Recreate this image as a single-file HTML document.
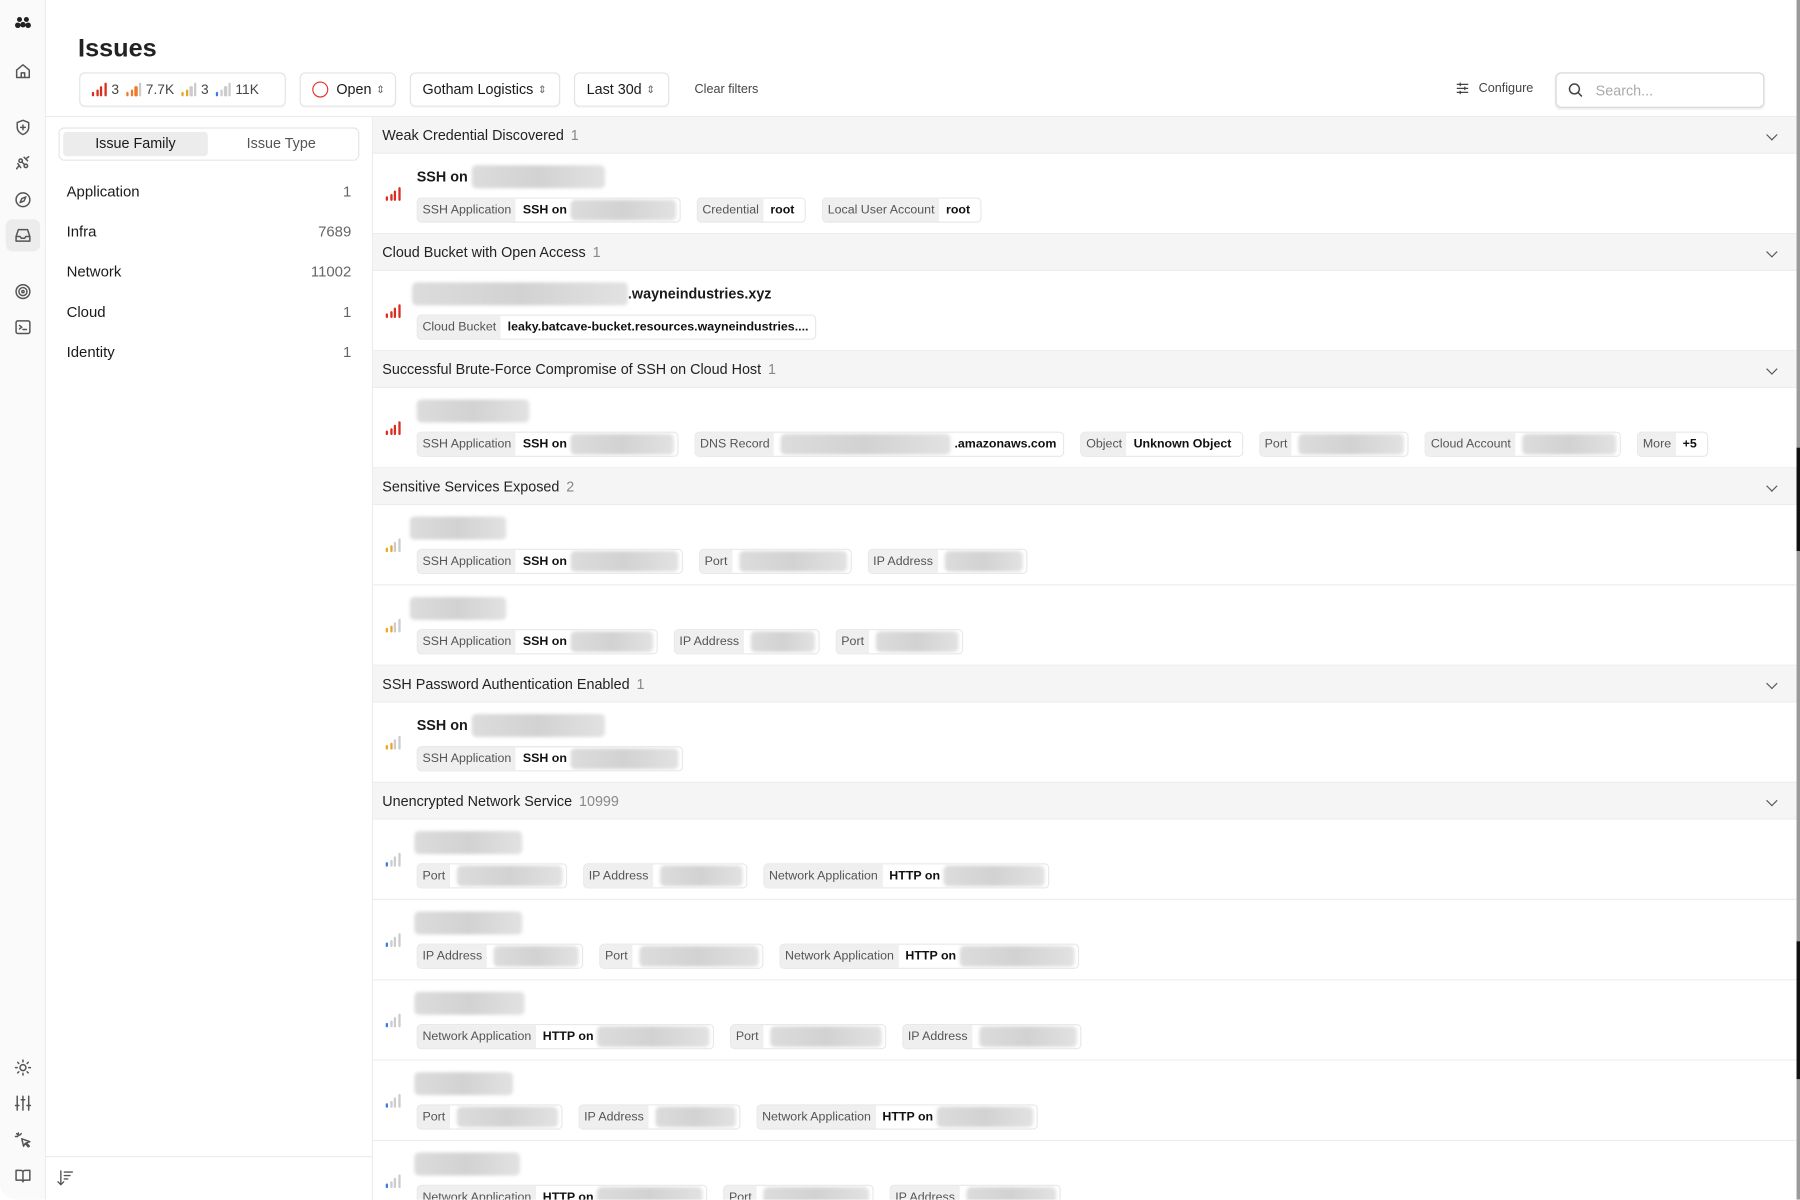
<!DOCTYPE html>
<html><head><meta charset="utf-8"><style>
*{box-sizing:border-box;margin:0;padding:0}
html,body{width:1800px;height:1200px;overflow:hidden;background:#fff}
body{font-family:"Liberation Sans",sans-serif;color:#1a1a1a}
#w{position:absolute;left:0;top:0;width:1568px;height:1045px;transform:scale(1.14796);transform-origin:0 0;overflow:hidden}
.a{position:absolute}
.rail{left:0;top:0;width:40px;height:1045px;background:#fafafa;border-right:1px solid #ebebeb;border-radius:0 0 0 14px}
.ic{position:absolute;left:12px;width:16px;height:16px}
.ic svg{width:16px;height:16px;fill:none;stroke:#555;stroke-width:1.3;stroke-linecap:round;stroke-linejoin:round}
.btn{position:absolute;top:63px;height:30px;border:1px solid #e3e3e3;border-radius:5px;font-size:12.5px;display:flex;align-items:center;padding:0 10px;gap:4px;white-space:nowrap;box-shadow:0 1px 1px rgba(0,0,0,.03)}
.ud{font-size:9px;color:#666}
.sig{display:inline-block;width:14px;height:12px;position:relative;flex-shrink:0}
.sig i{position:absolute;bottom:0;width:2.3px;background:#ccc;border-radius:1px}
.sig i:nth-child(1){left:0;height:4px}.sig i:nth-child(2){left:3.6px;height:6.5px}.sig i:nth-child(3){left:7.2px;height:9px}.sig i:nth-child(4){left:10.8px;height:12px}
.r i{background:#d92d20!important}
.o i:nth-child(-n+3){background:#ef7a2b}
.y i:nth-child(-n+2){background:#e6a820}
.b i:nth-child(1){background:#3b7be8}
.lp{left:40px;top:102px;width:285px;height:943px;border-right:1px solid #ebebeb}
.li{position:absolute;left:18px;right:18px;font-size:13px;display:flex;justify-content:space-between}
.li span:last-child{color:#666}
.gh{position:absolute;left:325px;width:1240px;height:32px;background:#f5f5f5;font-size:12.5px;color:#222;padding-left:8px;line-height:32px;border-bottom:1px solid #ececec}
.gh b{font-weight:normal;color:#888;margin-left:6px}
.gh .cv{position:absolute;right:18px;top:12px;width:7px;height:7px;border-right:1.2px solid #555;border-bottom:1.2px solid #555;transform:rotate(45deg)}
.row{position:absolute;left:325px;width:1240px;height:70px;border-bottom:1px solid #ececec;background:#fff}
.row .sig{position:absolute;left:11px;top:29px}
.tt{position:absolute;left:38px;top:9px;height:22px;font-size:12.5px;font-weight:bold;display:flex;align-items:center;white-space:nowrap}
.bl{display:inline-block;height:20px;background:linear-gradient(90deg,#dcdcdc,#d2d2d2 50%,#e2e2e2);border-radius:4px;filter:blur(1.5px)}
.chips{position:absolute;left:38px;top:38px;display:flex;gap:14px;white-space:nowrap}
.ch{height:22px;border:1px solid #e8e8e8;border-radius:4px;display:flex;font-size:10.8px;overflow:hidden;background:#fff}
.ch .k{background:#efefef;color:#555;padding:0 4px;line-height:20px}
.ch .v{padding:0 3px 0 6px;line-height:20px;display:flex;align-items:center;gap:3px;font-weight:bold;color:#111}
.ch .v .bl{height:18px}
</style></head><body><div id="w">

<div class="a rail">
 <div class="ic" style="top:12px"><svg viewBox="0 0 16 16"><g fill="#222" stroke="none"><circle cx="5" cy="5" r="2.2"/><circle cx="11" cy="5" r="2.2"/><circle cx="3.5" cy="10" r="2.4"/><circle cx="8" cy="9.5" r="2.4"/><circle cx="12.5" cy="10" r="2.4"/></g></svg></div>
 <div class="ic" style="top:54px"><svg viewBox="0 0 16 16"><path d="M2.5 7L8 2.5 13.5 7V13.5H2.5Z M6.5 13.5V9.5H9.5V13.5"/></svg></div>
 <div class="ic" style="top:103px"><svg viewBox="0 0 16 16"><path d="M8 1.8L13 3.8V8C13 11 10.5 13.3 8 14.2 5.5 13.3 3 11 3 8V3.8Z M8 6V10 M6 8H10"/></svg></div>
 <div class="ic" style="top:134px"><svg viewBox="0 0 16 16"><circle cx="6" cy="6" r="1.5"/><circle cx="10.5" cy="10.5" r="1.5"/><path d="M7 7L9.5 9.5 M9 3L12 6 M4 11L2.5 13 M11 4L13 2.5 M3.5 8.5L6 12"/></svg></div>
 <div class="ic" style="top:166px"><svg viewBox="0 0 16 16"><circle cx="8" cy="8" r="6"/><path d="M10.5 5.5L9 9 5.5 10.5 7 7Z"/></svg></div>
 <div style="position:absolute;left:5px;top:191px;width:30px;height:28px;background:#ececec;border-radius:6px"></div>
 <div class="ic" style="top:197px"><svg viewBox="0 0 16 16"><path d="M2 9L4 3H12L14 9V13H2Z M2 9H5.5L6.5 10.5H9.5L10.5 9H14"/></svg></div>
 <div class="ic" style="top:246px"><svg viewBox="0 0 16 16"><circle cx="8" cy="8" r="6"/><circle cx="8" cy="8" r="3.5"/><circle cx="8" cy="8" r="1"/></svg></div>
 <div class="ic" style="top:277px"><svg viewBox="0 0 16 16"><rect x="2" y="2.5" width="12" height="11" rx="1.5"/><path d="M5 6.5L7 8 5 9.5 M8 10H11"/></svg></div>
 <div class="ic" style="top:922px"><svg viewBox="0 0 16 16"><circle cx="8" cy="8" r="2.6"/><path d="M8 1.5V3 M8 13V14.5 M1.5 8H3 M13 8H14.5 M3.4 3.4L4.4 4.4 M11.6 11.6L12.6 12.6 M3.4 12.6L4.4 11.6 M11.6 4.4L12.6 3.4"/></svg></div>
 <div class="ic" style="top:953px"><svg viewBox="0 0 16 16"><path d="M3 2V14 M8 2V14 M13 2V14 M1.5 10H4.5 M6.5 5H9.5 M11.5 10H14.5"/></svg></div>
 <div class="ic" style="top:985px"><svg viewBox="0 0 16 16"><path d="M7 7L14 9.5 11 10.5 13.5 13.5 12.5 14 10 11 8.5 13.5Z M4 2V4 M1.5 5H3.5 M2.5 2.5L3.8 3.8 M6.5 2.5L5.2 3.8"/></svg></div>
 <div class="ic" style="top:1016px"><svg viewBox="0 0 16 16"><path d="M2 3.5H6C7 3.5 8 4.2 8 5.2V13.5C8 12.7 7.2 12 6 12H2Z M14 3.5H10C9 3.5 8 4.2 8 5.2V13.5C8 12.7 8.8 12 10 12H14Z"/></svg></div>
</div>

<div class="a" style="left:68px;top:29px;font-size:22px;font-weight:bold;color:#222">Issues</div>

<div class="btn" style="left:69px;width:180px;gap:3px;color:#444;font-size:12px">
 <span class="sig r"><i></i><i></i><i></i><i></i></span> 3&nbsp;
 <span class="sig o"><i></i><i></i><i></i><i></i></span> 7.7K&nbsp;
 <span class="sig y"><i></i><i></i><i></i><i></i></span> 3&nbsp;
 <span class="sig b"><i></i><i></i><i></i><i></i></span> 11K
</div>
<div class="btn" style="left:261px;width:84px"><span style="width:14px;height:14px;flex-shrink:0;border:1.5px solid #e0312b;border-radius:50%;display:inline-block;margin-right:3px"></span>Open <span class="ud">⇕</span></div>
<div class="btn" style="left:357px;width:131px">Gotham Logistics <span class="ud">⇕</span></div>
<div class="btn" style="left:500px;width:83px">Last 30d <span class="ud">⇕</span></div>
<div class="a" style="left:605px;top:72px;font-size:11px;color:#444">Clear filters</div>
<div class="a" style="left:1268px;top:71px;font-size:11px;color:#444;display:flex;align-items:center;gap:8px"><svg width="12" height="12" viewBox="0 0 12 12" fill="none" stroke="#444" stroke-width="1.1"><path d="M1 2.5H11 M1 6H11 M1 9.5H11 M4 1V4 M8 4.5V7.5 M4 8V11"/></svg>Configure</div>
<div class="a" style="left:1355px;top:63px;width:182px;height:31px;border:1px solid #d5d5d5;border-radius:5px;box-shadow:0 1px 2px rgba(0,0,0,.08);font-size:12.5px;color:#aaa;display:flex;align-items:center;padding-left:10px;gap:11px"><svg width="13" height="13" viewBox="0 0 13 13" fill="none" stroke="#444" stroke-width="1.3"><circle cx="5.5" cy="5.5" r="4.3"/><path d="M8.7 8.7L12 12"/></svg>Search...</div>

<div class="a" style="left:40px;top:101px;width:1525px;height:1px;background:#ebebeb"></div>

<div class="a lp">
 <div class="a" style="left:11px;top:9px;width:262px;height:29px;border:1px solid #e5e5e5;border-radius:5px"></div>
 <div class="a" style="left:15px;top:13px;width:126px;height:21px;background:#ececec;border-radius:3px;font-size:12.5px;text-align:center;line-height:21px">Issue Family</div>
 <div class="a" style="left:142px;top:13px;width:126px;height:21px;font-size:12.5px;text-align:center;line-height:21px;color:#555">Issue Type</div>
 <div class="li" style="top:57px"><span>Application</span><span>1</span></div>
 <div class="li" style="top:92px"><span>Infra</span><span>7689</span></div>
 <div class="li" style="top:127px"><span>Network</span><span>11002</span></div>
 <div class="li" style="top:162px"><span>Cloud</span><span>1</span></div>
 <div class="li" style="top:197px"><span>Identity</span><span>1</span></div>
 <div class="a" style="left:0;top:905px;width:284px;height:1px;background:#ebebeb"></div>
 <svg class="a" style="left:9px;top:916px" width="16" height="16" viewBox="0 0 16 16" fill="none" stroke="#555" stroke-width="1.2" stroke-linecap="round"><path d="M4 2V14 M1.5 11.5L4 14 6.5 11.5 M7 3H14 M7 6H12 M7 9H10"/></svg>
</div>

<div class="gh" style="top:102px">Weak Credential Discovered<b>1</b><span class="cv"></span></div>
<div class="row" style="top:134px"><span class="sig r"><i></i><i></i><i></i><i></i></span>
 <div class="tt">SSH on&nbsp;<span class="bl" style="width:116px"></span></div>
 <div class="chips"><div class="ch"><span class="k">SSH Application</span><span class="v">SSH on <span class="bl" style="width:92px"></span></span></div><div class="ch"><span class="k">Credential</span><span class="v">root&nbsp;&nbsp;</span></div><div class="ch"><span class="k">Local User Account</span><span class="v">root&nbsp;&nbsp;</span></div></div>
</div>

<div class="gh" style="top:204px">Cloud Bucket with Open Access<b>1</b><span class="cv"></span></div>
<div class="row" style="top:236px"><span class="sig r"><i></i><i></i><i></i><i></i></span>
 <div class="tt" style="left:34px"><span class="bl" style="width:188px"></span>.wayneindustries.xyz</div>
 <div class="chips"><div class="ch"><span class="k">Cloud Bucket</span><span class="v" style="padding-right:6px">leaky.batcave-bucket.resources.wayneindustries....</span></div></div>
</div>

<div class="gh" style="top:306px">Successful Brute-Force Compromise of SSH on Cloud Host<b>1</b><span class="cv"></span></div>
<div class="row" style="top:338px"><span class="sig r"><i></i><i></i><i></i><i></i></span>
 <div class="tt"><span class="bl" style="width:98px"></span></div>
 <div class="chips"><div class="ch"><span class="k">SSH Application</span><span class="v">SSH on <span class="bl" style="width:90px"></span></span></div><div class="ch"><span class="k">DNS Record</span><span class="v"><span class="bl" style="width:148px"></span>.amazonaws.com&nbsp;</span></div><div class="ch"><span class="k">Object</span><span class="v">Unknown Object&nbsp;&nbsp;</span></div><div class="ch"><span class="k">Port</span><span class="v"><span class="bl" style="width:92px"></span></span></div><div class="ch"><span class="k">Cloud Account</span><span class="v"><span class="bl" style="width:82px"></span></span></div><div class="ch"><span class="k">More</span><span class="v">+5&nbsp;&nbsp;</span></div></div>
</div>

<div class="gh" style="top:408px">Sensitive Services Exposed<b>2</b><span class="cv"></span></div>
<div class="row" style="top:440px"><span class="sig y"><i></i><i></i><i></i><i></i></span>
 <div class="tt" style="left:32px"><span class="bl" style="width:84px"></span></div>
 <div class="chips"><div class="ch"><span class="k">SSH Application</span><span class="v">SSH on <span class="bl" style="width:94px"></span></span></div><div class="ch"><span class="k">Port</span><span class="v"><span class="bl" style="width:94px"></span></span></div><div class="ch"><span class="k">IP Address</span><span class="v"><span class="bl" style="width:68px"></span></span></div></div>
</div>
<div class="row" style="top:510px"><span class="sig y"><i></i><i></i><i></i><i></i></span>
 <div class="tt" style="left:32px"><span class="bl" style="width:84px"></span></div>
 <div class="chips"><div class="ch"><span class="k">SSH Application</span><span class="v">SSH on <span class="bl" style="width:72px"></span></span></div><div class="ch"><span class="k">IP Address</span><span class="v"><span class="bl" style="width:56px"></span></span></div><div class="ch"><span class="k">Port</span><span class="v"><span class="bl" style="width:72px"></span></span></div></div>
</div>

<div class="gh" style="top:580px">SSH Password Authentication Enabled<b>1</b><span class="cv"></span></div>
<div class="row" style="top:612px"><span class="sig y"><i></i><i></i><i></i><i></i></span>
 <div class="tt">SSH on&nbsp;<span class="bl" style="width:116px"></span></div>
 <div class="chips"><div class="ch"><span class="k">SSH Application</span><span class="v">SSH on <span class="bl" style="width:94px"></span></span></div></div>
</div>

<div class="gh" style="top:682px">Unencrypted Network Service<b>10999</b><span class="cv"></span></div>
<div class="row" style="top:714px"><span class="sig b"><i></i><i></i><i></i><i></i></span>
 <div class="tt" style="left:36px"><span class="bl" style="width:94px"></span></div>
 <div class="chips"><div class="ch"><span class="k">Port</span><span class="v"><span class="bl" style="width:92px"></span></span></div><div class="ch"><span class="k">IP Address</span><span class="v"><span class="bl" style="width:72px"></span></span></div><div class="ch"><span class="k">Network Application</span><span class="v">HTTP on <span class="bl" style="width:88px"></span></span></div></div>
</div>
<div class="row" style="top:784px"><span class="sig b"><i></i><i></i><i></i><i></i></span>
 <div class="tt" style="left:36px"><span class="bl" style="width:94px"></span></div>
 <div class="chips"><div class="ch"><span class="k">IP Address</span><span class="v"><span class="bl" style="width:74px"></span></span></div><div class="ch"><span class="k">Port</span><span class="v"><span class="bl" style="width:104px"></span></span></div><div class="ch"><span class="k">Network Application</span><span class="v">HTTP on <span class="bl" style="width:100px"></span></span></div></div>
</div>
<div class="row" style="top:854px"><span class="sig b"><i></i><i></i><i></i><i></i></span>
 <div class="tt" style="left:36px"><span class="bl" style="width:96px"></span></div>
 <div class="chips"><div class="ch"><span class="k">Network Application</span><span class="v">HTTP on <span class="bl" style="width:98px"></span></span></div><div class="ch"><span class="k">Port</span><span class="v"><span class="bl" style="width:97px"></span></span></div><div class="ch"><span class="k">IP Address</span><span class="v"><span class="bl" style="width:85px"></span></span></div></div>
</div>
<div class="row" style="top:924px"><span class="sig b"><i></i><i></i><i></i><i></i></span>
 <div class="tt" style="left:36px"><span class="bl" style="width:86px"></span></div>
 <div class="chips"><div class="ch"><span class="k">Port</span><span class="v"><span class="bl" style="width:88px"></span></span></div><div class="ch"><span class="k">IP Address</span><span class="v"><span class="bl" style="width:70px"></span></span></div><div class="ch"><span class="k">Network Application</span><span class="v">HTTP on <span class="bl" style="width:84px"></span></span></div></div>
</div>
<div class="row" style="top:994px"><span class="sig b"><i></i><i></i><i></i><i></i></span>
 <div class="tt" style="left:36px"><span class="bl" style="width:92px"></span></div>
 <div class="chips"><div class="ch"><span class="k">Network Application</span><span class="v">HTTP on <span class="bl" style="width:92px"></span></span></div><div class="ch"><span class="k">Port</span><span class="v"><span class="bl" style="width:92px"></span></span></div><div class="ch"><span class="k">IP Address</span><span class="v"><span class="bl" style="width:78px"></span></span></div></div>
</div>

<div class="a" style="left:1565px;top:0;width:3px;height:1045px;background:#9a9a9a"></div>
<div class="a" style="left:1565px;top:390px;width:3px;height:90px;background:#111"></div>
<div class="a" style="left:1565px;top:820px;width:3px;height:120px;background:#111"></div>
</div></body></html>
